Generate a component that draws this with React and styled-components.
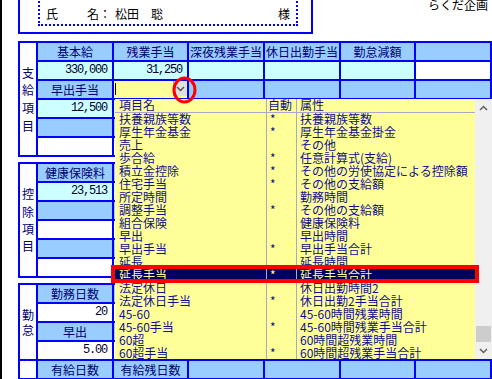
import React from 'react';
import styled, { createGlobalStyle } from 'styled-components';

const BLUE = '#0000FF';
const HEAD = '#99CCFF';
const CYAN = '#CCFFFF';
const YELLOW = '#FFFF99';
const WHITE = '#FFFFFF';
const JP = '"Noto Sans CJK JP", "Noto Sans", sans-serif';

const Global = createGlobalStyle`
  html, body { margin: 0; padding: 0; background: #fff; overflow: hidden; }
  body { font-family: ${JP}; }
`;

const Page = styled.div`
  position: relative;
  width: 492px;
  height: 379px;
  overflow: hidden;
  box-sizing: border-box;
  border-left: 2px solid #000;
  background: #fff;
  font-family: ${JP};
  font-size: 12px;
`;

const Header = styled.div`
  display: flex;
  align-items: flex-start;
  height: 45px;
  margin-top: -4px;
`;

const NameBox = styled.div`
  box-sizing: border-box;
  flex-shrink: 0;
  width: 295px;
  height: 38px;
  margin-left: 16px;
  border: 2px solid ${BLUE};
`;

const NameInner = styled.div`
  box-sizing: border-box;
  width: 260px;
  height: 32px;
  margin: -4px 0 0 18px;
  border: 2px dotted ${BLUE};
  display: flex;
  align-items: flex-end;
  padding: 0 6px 3px 6px;
  font-size: 12px;
  line-height: 14px;
  color: #000;
  white-space: nowrap;
`;

const Gap = styled.span`
  display: inline-block;
  width: ${p => p.$w}px;
`;

const Sama = styled.span`
  margin-left: auto;
`;

const Company = styled.div`
  flex-shrink: 0;
  margin: 2px 0 0 115px;
  font-size: 12px;
  line-height: 14px;
  color: #000;
  white-space: nowrap;
`;

const Grid = styled.div`
  display: grid;
  box-sizing: border-box;
  width: 474px;
  margin: 0 0 5px 16px;
  grid-template-columns: 16px 74px 73px 74px 74px 73px 74px;
  grid-auto-rows: 17px;
  gap: 2px;
  padding: 2px;
  background: ${BLUE};
`;

const Cell = styled.div`
  background: ${p => p.$bg || WHITE};
  color: #000070;
  font-size: 12px;
  line-height: 17px;
  text-align: center;
  white-space: nowrap;
`;

const Num = styled(Cell)`
  text-align: right;
  padding-right: 5px;
  font-family: "Liberation Mono", monospace;
  letter-spacing: -1.2px;
  color: #000030;
`;

const Side = styled.div`
  grid-row: span ${p => p.$span};
  background: #fff;
  display: flex;
  flex-direction: column;
  justify-content: center;
  align-items: center;
  color: #000070;
  font-size: 12px;
  line-height: ${p => p.$lh}px;
`;

const Combo = styled.div`
  background: ${YELLOW};
  display: flex;
  justify-content: space-between;
  align-items: flex-start;
`;

const Caret = styled.div`
  width: 1px;
  height: 12px;
  margin: 2px 0 0 1px;
  background: #000;
`;

const DropBtn = styled.div`
  box-sizing: border-box;
  width: 14px;
  height: 15px;
  background: #E1E1E1;
  border-left: 1px solid #B0B0B0;
  display: flex;
  align-items: center;
  justify-content: center;
`;

const Popup = styled.div`
  position: absolute;
  left: 113px;
  top: 99px;
  width: 377px;
  height: 260px;
  display: flex;
  background: ${YELLOW};
  z-index: 2;
`;

const ListArea = styled.div`
  flex: 1;
  overflow: hidden;
  display: flex;
  flex-direction: column;
`;

const LRow = styled.div`
  display: grid;
  grid-template-columns: 152px 30px 1fr;
  flex-shrink: 0;
  height: 13px;
  font-size: 12px;
  line-height: 12px;
  background: ${p => (p.$sel ? '#00005E' : 'transparent')};
  color: ${p => (p.$sel ? YELLOW : '#10108C')};
`;

const LHead = styled(LRow)`
  border-bottom: 1px solid #A8A8C8;
`;

const LCell = styled.div`
  box-sizing: border-box;
  padding-left: ${p => p.$pl}px;
  border-right: ${p => (p.$sep ? '1px solid #A8A8C8' : 'none')};
  white-space: nowrap;
`;

const Scroll = styled.div`
  width: 17px;
  flex-shrink: 0;
  background: #F0F0F0;
  display: flex;
  flex-direction: column;
`;

const ScrollBtn = styled.div`
  height: 17px;
  flex-shrink: 0;
  display: flex;
  align-items: center;
  justify-content: center;
`;

const Track = styled.div`
  flex: 1;
  display: flex;
  flex-direction: column;
  justify-content: flex-end;
  align-items: center;
`;

const Thumb = styled.div`
  width: 15px;
  height: 16px;
  background: #CDCDCD;
`;

const SelMark = styled.div`
  position: absolute;
  left: 109px;
  top: 265px;
  width: 368px;
  height: 18px;
  box-sizing: border-box;
  border: 4px solid #FF0000;
  z-index: 3;
`;

const CircleMark = styled.svg`
  position: absolute;
  left: 169px;
  top: 76px;
  z-index: 3;
`;

const Chevron = ({ up, color = '#606060' }) => (
  <svg width="9" height="6" viewBox="0 0 9 6">
    <path
      d={up ? 'M1 5 L4.5 1.5 L8 5' : 'M1 1 L4.5 4.5 L8 1'}
      stroke={color}
      strokeWidth="1.5"
      fill="none"
    />
  </svg>
);

const SideLabel = ({ text, span, lh }) => (
  <Side $span={span} $lh={lh}>
    {text.split('').map((c, i) => (
      <span key={i}>{c}</span>
    ))}
  </Side>
);

const items = [
  ['扶養親族等数', '*', '扶養親族等数'],
  ['厚生年金基金', '*', '厚生年金基金掛金'],
  ['売上', '', 'その他'],
  ['歩合給', '*', '任意計算式(支給)'],
  ['積立金控除', '*', 'その他の労使協定による控除額'],
  ['住宅手当', '*', 'その他の支給額'],
  ['所定時間', '', '勤務時間'],
  ['調整手当', '*', 'その他の支給額'],
  ['組合保険', '', '健康保険料'],
  ['早出', '', '早出時間'],
  ['早出手当', '*', '早出手当合計'],
  ['延長', '', '延長時間'],
  ['延長手当', '*', '延長手当合計'],
  ['法定休日', '', '休日出勤時間2'],
  ['法定休日手当', '*', '休日出勤2手当合計'],
  ['45-60', '', '45-60時間残業時間'],
  ['45-60手当', '*', '45-60時間残業手当合計'],
  ['60超', '', '60時間超残業時間'],
  ['60超手当', '*', '60時間超残業手当合計'],
];

const SELECTED = 12;

const Row = ({ cells }) =>
  cells.map(([kind, bg, text], i) =>
    kind === 'n' ? (
      <Num key={i} $bg={bg}>{text}</Num>
    ) : (
      <Cell key={i} $bg={bg}>{text}</Cell>
    )
  );

export default function App() {
  return (
    <>
      <Global />
      <Page>
        <Header>
          <NameBox>
            <NameInner>
              <span>氏</span>
              <Gap $w={29} />
              <span>名：</span>
              <Gap $w={4} />
              <span>松田　聡</span>
              <Sama>様</Sama>
            </NameInner>
          </NameBox>
          <Company>らくだ企画　社</Company>
        </Header>

        <Grid>
          <SideLabel text="支給項目" span={6} lh={17.7} />
          <Row
            cells={[
              ['c', HEAD, '基本給'],
              ['c', HEAD, '残業手当'],
              ['c', HEAD, '深夜残業手当'],
              ['c', HEAD, '休日出勤手当'],
              ['c', HEAD, '勤怠減額'],
              ['c', HEAD, ''],
            ]}
          />
          <Row
            cells={[
              ['n', CYAN, '330,000'],
              ['n', CYAN, '31,250'],
              ['n', CYAN, ''],
              ['n', CYAN, ''],
              ['n', CYAN, ''],
              ['n', WHITE, ''],
            ]}
          />
          <Cell $bg={HEAD}>早出手当</Cell>
          <Combo>
            <Caret />
            <DropBtn>
              <Chevron color="#555" />
            </DropBtn>
          </Combo>
          <Row cells={[['c', HEAD], ['c', HEAD], ['c', HEAD], ['c', HEAD]]} />
          <Row
            cells={[
              ['n', CYAN, '12,500'],
              ['n', CYAN, ''],
              ['n', CYAN, ''],
              ['n', CYAN, ''],
              ['n', CYAN, ''],
              ['n', WHITE, ''],
            ]}
          />
          <Row cells={[['c', HEAD], ['c', HEAD], ['c', HEAD], ['c', HEAD], ['c', HEAD], ['c', HEAD]]} />
          <Row cells={[['c'], ['c'], ['c'], ['c'], ['c'], ['c']]} />
        </Grid>

        <Grid>
          <SideLabel text="控除項目" span={6} lh={17.3} />
          <Row
            cells={[
              ['c', HEAD, '健康保険料'],
              ['c', HEAD],
              ['c', HEAD],
              ['c', HEAD],
              ['c', HEAD],
              ['c', HEAD],
            ]}
          />
          <Row
            cells={[
              ['n', CYAN, '23,513'],
              ['n', CYAN, ''],
              ['n', CYAN, ''],
              ['n', CYAN, ''],
              ['n', CYAN, ''],
              ['n', WHITE, ''],
            ]}
          />
          <Row cells={[['c', HEAD], ['c', HEAD], ['c', HEAD], ['c', HEAD], ['c', HEAD], ['c', HEAD]]} />
          <Row cells={[['c'], ['c'], ['c'], ['c'], ['c'], ['c']]} />
          <Row cells={[['c', HEAD], ['c', HEAD], ['c', HEAD], ['c', HEAD], ['c', HEAD], ['c', HEAD]]} />
          <Row cells={[['c'], ['c'], ['c'], ['c'], ['c'], ['c']]} />
        </Grid>

        <Grid>
          <SideLabel text="勤怠" span={4} lh={15} />
          <Row
            cells={[
              ['c', HEAD, '勤務日数'],
              ['c', HEAD],
              ['c', HEAD],
              ['c', HEAD],
              ['c', HEAD],
              ['c', HEAD],
            ]}
          />
          <Row cells={[['n', WHITE, '20'], ['n'], ['n'], ['n'], ['n'], ['n']]} />
          <Row
            cells={[
              ['c', HEAD, '早出'],
              ['c', HEAD],
              ['c', HEAD],
              ['c', HEAD],
              ['c', HEAD],
              ['c', HEAD],
            ]}
          />
          <Row cells={[['n', WHITE, '5.00'], ['n'], ['n'], ['n'], ['n'], ['n']]} />
          <Cell />
          <Row
            cells={[
              ['c', HEAD, '有給日数'],
              ['c', HEAD, '有給残日数'],
              ['c', HEAD],
              ['c', HEAD],
              ['c', HEAD],
              ['c', HEAD],
            ]}
          />
        </Grid>

        <Popup>
          <ListArea>
            <LHead>
              <LCell $pl={4} $sep>項目名</LCell>
              <LCell $pl={1} $sep>自動</LCell>
              <LCell $pl={3}>属性</LCell>
            </LHead>
            {items.map(([name, auto, attr], i) => (
              <LRow key={i} $sel={i === SELECTED}>
                <LCell $pl={4} $sep>{name}</LCell>
                <LCell $pl={3} $sep>{auto}</LCell>
                <LCell $pl={3}>{attr}</LCell>
              </LRow>
            ))}
          </ListArea>
          <Scroll>
            <ScrollBtn>
              <Chevron up />
            </ScrollBtn>
            <Track>
              <Thumb />
            </Track>
            <ScrollBtn>
              <Chevron />
            </ScrollBtn>
          </Scroll>
        </Popup>

        <SelMark />
        <CircleMark width="28" height="29" viewBox="0 0 28 29">
          <ellipse cx="13.5" cy="14" rx="10.5" ry="12" stroke="#FF0000" strokeWidth="3" fill="none" />
        </CircleMark>
      </Page>
    </>
  );
}
